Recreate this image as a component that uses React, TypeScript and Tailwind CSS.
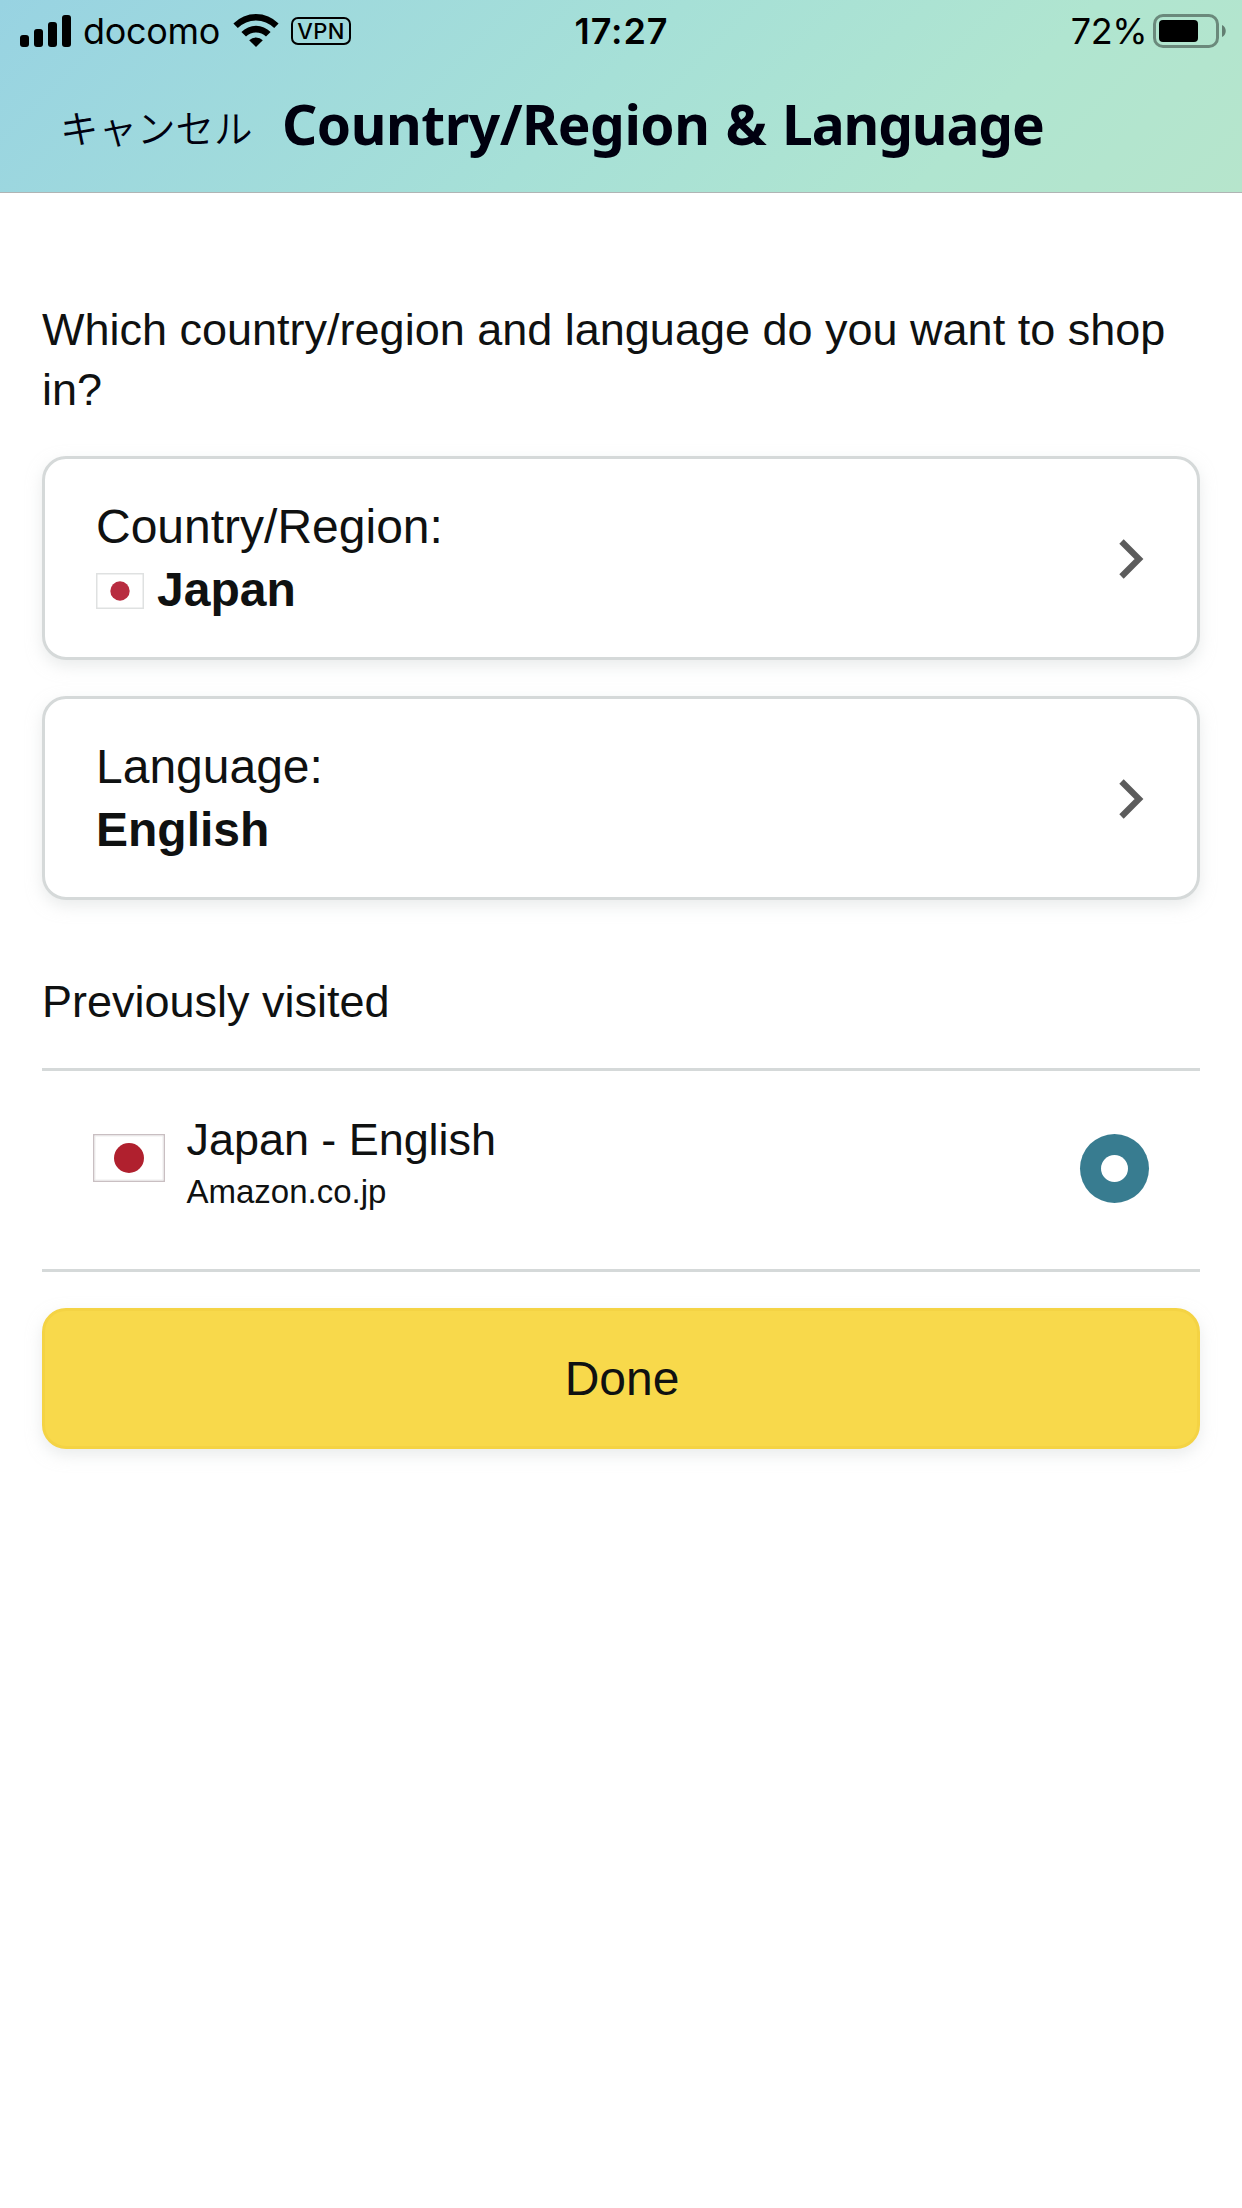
import React, { useState } from 'react';

const regions = [{ id: 'jp-en', name: 'Japan - English', site: 'Amazon.co.jp' }];

function SignalIcon() {
  return (
    <svg width="51" height="32" viewBox="0 0 51 32" className="shrink-0">
      <rect x="0" y="20" width="9" height="12" rx="3" />
      <rect x="14" y="14" width="9" height="18" rx="3" />
      <rect x="28" y="7" width="9" height="25" rx="3" />
      <rect x="42" y="0" width="9" height="32" rx="3" />
    </svg>
  );
}

function WifiIcon() {
  return (
    <svg width="46" height="33" viewBox="0 0 46 33" className="mb-px shrink-0">
      <path d="M0.4 9.4 A32 32 0 0 1 45.6 9.4 L41.2 14 A25.8 25.8 0 0 0 4.8 14 Z" />
      <path d="M8.4 18 A20.4 20.4 0 0 1 37.6 18 L33 22.6 A14.2 14.2 0 0 0 13 22.6 Z" />
      <path d="M16.2 26.2 A9.6 9.6 0 0 1 29.8 26.2 L23 33 Z" />
    </svg>
  );
}

function BatteryIcon() {
  return (
    <svg width="74" height="34" viewBox="0 0 74 34" className="shrink-0">
      <rect x="1.5" y="1.5" width="63" height="31" rx="8.5" fill="none" stroke="#000" strokeOpacity="0.4" strokeWidth="3" />
      <rect x="6" y="6" width="39" height="22" rx="4" />
      <path d="M69 11 C74 13 74 21 69 23 Z" fillOpacity="0.45" />
    </svg>
  );
}

function ChevronIcon() {
  return (
    <svg width="25" height="42" viewBox="0 0 25 42" className="shrink-0">
      <path d="M2.5 4.5 L20 22 L2.5 39.5" fill="none" stroke="#5c5c5c" strokeWidth="6.2" />
    </svg>
  );
}

function SmallFlag() {
  return (
    <svg width="48" height="36" viewBox="0 0 48 36" className="shrink-0">
      <rect x="0.75" y="0.75" width="46.5" height="34.5" fill="#fff" stroke="#dfe1e1" strokeWidth="1.5" />
      <circle cx="24" cy="18" r="9.7" fill="#b82c40" />
    </svg>
  );
}

function LargeFlag() {
  return (
    <svg width="72" height="48" viewBox="0 0 72 48" className="shrink-0">
      <rect x="0.75" y="0.75" width="70.5" height="46.5" fill="#fff" stroke="#c9bfc2" strokeWidth="1.5" />
      <rect x="2" y="2" width="68" height="44" fill="none" stroke="#ededed" strokeWidth="1" />
      <circle cx="36" cy="24" r="15" fill="#b0202e" />
    </svg>
  );
}

function StatusBar() {
  return (
    <div className="grid h-[60px] grid-cols-3 items-center pl-5 pr-[15px] font-['Inter','Liberation_Sans',sans-serif] text-[36px] leading-[60px]">
      <div className="flex items-center">
        <SignalIcon />
        <span className="ml-3 w-[150px] pt-px tracking-[-0.3px]">docomo</span>
        <WifiIcon />
        <span className="ml-3 flex h-7 w-[60px] items-center justify-center rounded-[7px] border-2 border-black text-[22px] font-medium leading-none tracking-[0.4px]">
          VPN
        </span>
      </div>
      <div className="pr-1 pt-px text-center font-semibold tracking-[0.9px]">17:27</div>
      <div className="flex items-center justify-end">
        <span className="mr-1.5 pt-px tracking-[-0.5px]">72%</span>
        <BatteryIcon />
      </div>
    </div>
  );
}

function SelectCard({ label, value, flag }: { label: string; value: string; flag?: boolean }) {
  return (
    <button className="flex h-[204px] w-full items-center justify-between rounded-[24px] border-[3px] border-[#d5d9d9] bg-white pl-[51px] pr-[53px] text-left text-[48px] leading-[63px] shadow-[0_6px_15px_rgba(213,217,217,0.5)]">
      <div>
        <div>{label}</div>
        <div className="flex items-center font-bold">
          {flag && (
            <span className="mr-[13px] pt-0.5">
              <SmallFlag />
            </span>
          )}
          {value}
        </div>
      </div>
      <ChevronIcon />
    </button>
  );
}

export default function App() {
  const [selected, setSelected] = useState('jp-en');

  return (
    <div className="min-h-[2208px] w-[1242px] bg-white font-['Liberation_Sans',Arial,sans-serif] text-[#0f1111]">
      {/* Header */}
      <header className="h-[193px] border-b border-[#b0b4b4] bg-[linear-gradient(135deg,#98d3e2_0%,#a6e0d7_48%,#b0e5d0_77%,#b6e5cc_100%)] text-black">
        <StatusBar />
        <div className="flex items-baseline pl-[60px] pt-[26px] text-[#00000f]">
          <button className="w-[222px] -translate-y-0.5 text-left font-['Noto_Sans_CJK_JP',sans-serif] text-[38.5px] font-[350] leading-[76px]">
            キャンセル
          </button>
          <h1 className="whitespace-nowrap font-['Noto_Sans',sans-serif] text-[55px] font-bold leading-[76px] tracking-[-0.47px]">
            Country/Region <span className="ml-[2px]">&amp;</span>{' '}
            <span className="ml-[2px] tracking-[-1.1px]">Language</span>
          </h1>
        </div>
      </header>

      <main className="px-[42px] pt-[107px]">
        <p className="text-[45px] leading-[60px]">
          Which country/region and language do you want to shop in?
        </p>

        <div className="mt-9 flex flex-col gap-9">
          <SelectCard label="Country/Region:" value="Japan" flag />
          <SelectCard label="Language:" value="English" />
        </div>

        <h2 className="mt-[72px] text-[45px] leading-[60px]">Previously visited</h2>

        {/* Visited list */}
        <ul className="mt-9 border-y-[3px] border-[#d5d9d9]">
          {regions.map((region) => (
            <li
              key={region.id}
              className="flex h-[198px] items-start px-[51px]"
              onClick={() => setSelected(region.id)}
            >
              <div className="pt-[63px]">
                <LargeFlag />
              </div>
              <div className="ml-[21.5px] flex-1 pt-[39px]">
                <div className="text-[45px] leading-[60px] tracking-[-0.05px]">{region.name}</div>
                <div className="text-[33px] leading-[43px]">{region.site}</div>
              </div>
              <span className="mt-[63px] flex size-[69px] items-center justify-center rounded-full bg-[#387c90]">
                {selected === region.id && <span className="size-[27px] rounded-full bg-white" />}
              </span>
            </li>
          ))}
        </ul>

        <button className="mt-9 block h-[141px] w-full rounded-[24px] border-[3px] border-[#f4d344] bg-[#f8d94b] pl-0.5 text-[48px] leading-[60px] shadow-[0_6px_15px_rgba(213,217,217,0.5)]">
          Done
        </button>
      </main>
    </div>
  );
}
